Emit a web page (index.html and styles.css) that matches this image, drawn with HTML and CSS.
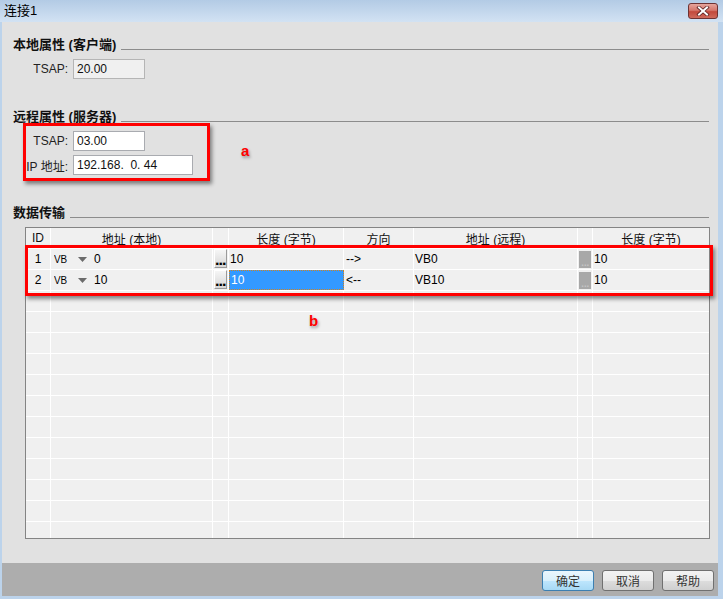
FILE: index.html
```html
<!DOCTYPE html>
<html lang="zh">

<head>
    <meta charset="UTF-8">
    <title>连接1</title>
    <link rel="stylesheet" href="styles.css">
</head>

<body>

    <div class="window">
        <div class="titlebar">
            <span class="title">连接1</span>
            <div class="close-btn">
                <svg width="14" height="10" viewBox="0 0 14 10">
                    <path d="M3 1.5 L11 8.5 M11 1.5 L3 8.5" stroke="#5a2020" stroke-width="3.6" stroke-linecap="square"/>
                    <path d="M3 1.5 L11 8.5 M11 1.5 L3 8.5" stroke="#fff" stroke-width="2" stroke-linecap="square"/>
                </svg>
            </div>
        </div>

        <div class="frame">
            <div class="content">
                <div class="group-title first"><span>本地属性 (客户端)</span></div>
                <div class="form">
                    <label>TSAP:</label>
                    <input class="field disabled" value="20.00" readonly>
                </div>

                <div class="group-title"><span>远程属性 (服务器)</span></div>
                <div class="form">
                    <label>TSAP:</label>
                    <input class="field" value="03.00">
                    <label>IP 地址:</label>
                    <input class="field wide" value="192.168.  0. 44">
                </div>

                <div class="group-title"><span>数据传输</span></div>
                <div class="grid">
                    <div class="grid-row head">
                        <div class="cell center">ID</div>
                        <div class="cell center">地址 (本地)</div>
                        <div class="cell"></div>
                        <div class="cell center">长度 (字节)</div>
                        <div class="cell center">方向</div>
                        <div class="cell center">地址 (远程)</div>
                        <div class="cell"></div>
                        <div class="cell center">长度 (字节)</div>
                    </div>
                    <div class="grid-row">
                        <div class="cell center">1</div>
                        <div class="cell addr"><span class="area">VB</span><svg class="drop" width="9" height="5" viewBox="0 0 9 5"><polygon points="0,0 9,0 4.5,5" fill="#6b6b6b"/></svg><span>0</span></div>
                        <div class="cell btn-cell"><span class="dots-btn">...</span></div>
                        <div class="cell len">10</div>
                        <div class="cell dir">--&gt;</div>
                        <div class="cell remote">VB0</div>
                        <div class="cell btn-cell"><span class="dots-btn off">...</span></div>
                        <div class="cell len">10</div>
                    </div>
                    <div class="grid-row">
                        <div class="cell center">2</div>
                        <div class="cell addr"><span class="area">VB</span><svg class="drop" width="9" height="5" viewBox="0 0 9 5"><polygon points="0,0 9,0 4.5,5" fill="#6b6b6b"/></svg><span>10</span></div>
                        <div class="cell btn-cell"><span class="dots-btn">...</span></div>
                        <div class="cell len selected">10</div>
                        <div class="cell dir">&lt;--</div>
                        <div class="cell remote">VB10</div>
                        <div class="cell btn-cell"><span class="dots-btn off">...</span></div>
                        <div class="cell len">10</div>
                    </div>
                    <div class="grid-row"><div class="cell"></div><div class="cell"></div><div class="cell"></div><div class="cell"></div><div class="cell"></div><div class="cell"></div><div class="cell"></div><div class="cell"></div></div>
                    <div class="grid-row"><div class="cell"></div><div class="cell"></div><div class="cell"></div><div class="cell"></div><div class="cell"></div><div class="cell"></div><div class="cell"></div><div class="cell"></div></div>
                    <div class="grid-row"><div class="cell"></div><div class="cell"></div><div class="cell"></div><div class="cell"></div><div class="cell"></div><div class="cell"></div><div class="cell"></div><div class="cell"></div></div>
                    <div class="grid-row"><div class="cell"></div><div class="cell"></div><div class="cell"></div><div class="cell"></div><div class="cell"></div><div class="cell"></div><div class="cell"></div><div class="cell"></div></div>
                    <div class="grid-row"><div class="cell"></div><div class="cell"></div><div class="cell"></div><div class="cell"></div><div class="cell"></div><div class="cell"></div><div class="cell"></div><div class="cell"></div></div>
                    <div class="grid-row"><div class="cell"></div><div class="cell"></div><div class="cell"></div><div class="cell"></div><div class="cell"></div><div class="cell"></div><div class="cell"></div><div class="cell"></div></div>
                    <div class="grid-row"><div class="cell"></div><div class="cell"></div><div class="cell"></div><div class="cell"></div><div class="cell"></div><div class="cell"></div><div class="cell"></div><div class="cell"></div></div>
                    <div class="grid-row"><div class="cell"></div><div class="cell"></div><div class="cell"></div><div class="cell"></div><div class="cell"></div><div class="cell"></div><div class="cell"></div><div class="cell"></div></div>
                    <div class="grid-row"><div class="cell"></div><div class="cell"></div><div class="cell"></div><div class="cell"></div><div class="cell"></div><div class="cell"></div><div class="cell"></div><div class="cell"></div></div>
                    <div class="grid-row"><div class="cell"></div><div class="cell"></div><div class="cell"></div><div class="cell"></div><div class="cell"></div><div class="cell"></div><div class="cell"></div><div class="cell"></div></div>
                    <div class="grid-row"><div class="cell"></div><div class="cell"></div><div class="cell"></div><div class="cell"></div><div class="cell"></div><div class="cell"></div><div class="cell"></div><div class="cell"></div></div>
                    <div class="grid-row"><div class="cell"></div><div class="cell"></div><div class="cell"></div><div class="cell"></div><div class="cell"></div><div class="cell"></div><div class="cell"></div><div class="cell"></div></div>
                </div>
            </div>

            <div class="footer">
                <button class="dlg-btn default">确定</button>
                <button class="dlg-btn">取消</button>
                <button class="dlg-btn">帮助</button>
            </div>
        </div>

        <!-- annotations drawn over the dialog -->
        <div class="mark mark-a"></div>
        <span class="mark-label label-a">a</span>
        <div class="mark mark-b"></div>
        <span class="mark-label label-b">b</span>
    </div>

</body>

</html>
```

FILE: styles.css
```css
* {
    box-sizing: border-box;
    margin: 0;
    padding: 0;
}

body {
    font-family: "Liberation Sans", "Noto Sans CJK SC", sans-serif;
    font-size: 12px;
    color: #000;
    background: #fff;
}

.window {
    position: relative;
    width: 723px;
    height: 599px;
    display: flex;
    flex-direction: column;
    background: #bcd3eb;
}

.titlebar {
    height: 22px;
    display: flex;
    justify-content: space-between;
    align-items: flex-start;
    padding: 0 5px 0 4px;
    background: linear-gradient(#b3cbe5, #d2e2f3);
}

.title {
    line-height: 22px;
    font-size: 13px;
}

.close-btn {
    margin-top: 3px;
    width: 30px;
    height: 16px;
    display: flex;
    align-items: center;
    justify-content: center;
    border: 1px solid #6e3333;
    border-radius: 3px;
    background: linear-gradient(#e6a59c 0%, #d5776c 45%, #c2493c 55%, #cf6a5c 100%);
}

.frame {
    flex: 1;
    display: flex;
    flex-direction: column;
    padding: 0 5px 3px 2px;
}

.content {
    flex: 1;
    background: #e1e1e1;
    padding: 0 9px 0 11px;
}

.group-title {
    display: flex;
    align-items: center;
    height: 16px;
    line-height: 16px;
    margin-top: 30px;
    font-size: 13px;
    font-weight: bold;
    color: #111;
}

.group-title.first {
    margin-top: 15px;
}

.group-title::after {
    content: "";
    flex: 1;
    height: 1px;
    margin: 8px 0 0 5px;
    background: #8c8c8c;
}

.form {
    display: grid;
    grid-template-columns: 55px auto;
    column-gap: 5px;
    row-gap: 4px;
    margin-top: 6px;
    justify-items: start;
    align-items: center;
}

.form label {
    justify-self: end;
    color: #222;
    font-size: 12px;
}

.field {
    width: 72px;
    height: 20px;
    border: 1px solid #a9abb0;
    padding: 0 3px;
    font-family: "Liberation Sans", sans-serif;
    font-size: 12px;
    color: #111;
    background: #fff;
    outline: none;
}

.field.wide {
    width: 120px;
}

.field.disabled {
    background: #f0f0f0;
    border-color: #b5b5b5;
}

.grid {
    margin: 6px 0 0 12px;
    width: 685px;
    height: 312px;
    border: 1px solid #848484;
    background: #f0f0f0;
    overflow: hidden;
}

.grid-row {
    display: grid;
    grid-template-columns: 25px 162px 16px 115px 70px 164px 15px 116px;
    height: 21px;
    border-bottom: 1px solid #fff;
}

.cell {
    border-right: 1px solid #fff;
    display: flex;
    align-items: center;
    white-space: nowrap;
    overflow: hidden;
}

.cell:last-child {
    border-right: none;
}

.cell.center {
    justify-content: center;
}

.head .cell {
    color: #111;
}

.addr {
    padding-left: 3px;
}

.area {
    width: 24px;
    font-size: 11px;
    transform: scaleX(0.9);
    transform-origin: left center;
}

.drop {
    margin-right: 7px;
}

.btn-cell {
    align-items: stretch;
    padding: 0 1px 1px 1px;
}

.dots-btn {
    flex: 1;
    display: flex;
    align-items: flex-end;
    justify-content: center;
    font-family: "DejaVu Sans", sans-serif;
    font-weight: bold;
    font-size: 13px;
    line-height: 10px;
    letter-spacing: -1.5px;
    padding: 0 1px 1px 0;
    border-top: 1px solid #fff;
    border-left: 1px solid #fff;
    border-right: 1px solid #9a9a9a;
    border-bottom: 1px solid #9a9a9a;
    background: linear-gradient(#f6f6f6, #d6d6d6);
    overflow: hidden;
}

.dots-btn.off {
    margin: 2px 0 0 0;
    border: none;
    background: #a8a8a8;
    color: #c4c4c4;
    font-weight: normal;
}

.len {
    padding-left: 1px;
}

.dir {
    padding-left: 2px;
}

.remote {
    padding-left: 1px;
}

.selected {
    background: #3399ff;
    color: #fff;
    border: 1px dotted #d3821a;
    padding-left: 1px;
}

.footer {
    height: 33px;
    display: flex;
    justify-content: flex-end;
    align-items: flex-start;
    gap: 8px;
    padding: 7px 4px 0 0;
    background: #adadad;
}

.dlg-btn {
    width: 52px;
    height: 21px;
    border: 1px solid #707070;
    border-radius: 3px;
    background: linear-gradient(#f3f3f3 0%, #ebebeb 50%, #dddddd 51%, #cfcfcf 100%);
    font-family: "Liberation Sans", "Noto Sans CJK SC", sans-serif;
    font-size: 12px;
    color: #333;
}

.dlg-btn.default {
    border-color: #3c7fb1;
    background: linear-gradient(#eaf6fd 0%, #d9f0fc 50%, #bee6fd 51%, #a7d9f5 100%);
}

.mark {
    position: absolute;
    border: 3px solid #ff0000;
    box-shadow: 2px 3px 4px rgba(0, 0, 0, 0.45);
}

.mark-a {
    left: 23px;
    top: 123px;
    width: 187px;
    height: 58px;
}

.mark-b {
    left: 25px;
    top: 245px;
    width: 688px;
    height: 51px;
}

.mark-label {
    position: absolute;
    color: #ff0000;
    font-family: "Liberation Sans", sans-serif;
    font-weight: bold;
    font-size: 15px;
    line-height: 16px;
    text-shadow: 1px 2px 3px rgba(0, 0, 0, 0.35);
}

.label-a {
    left: 241px;
    top: 143px;
}

.label-b {
    left: 309px;
    top: 313px;
}
```
